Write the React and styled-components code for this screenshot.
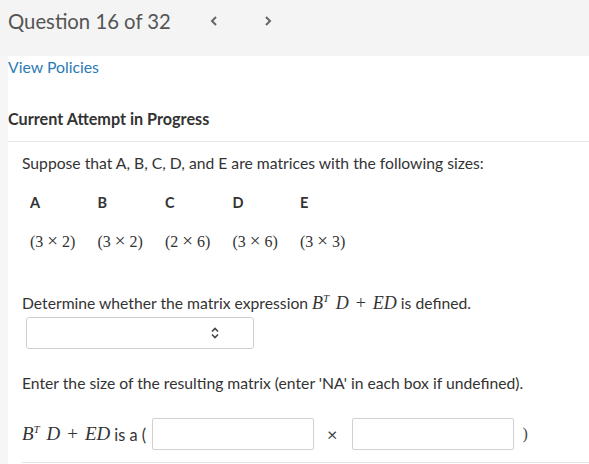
import React from "react"
import styled, { createGlobalStyle } from "styled-components"

const GlobalStyle = createGlobalStyle`
  body {
    margin: 0;
    background: #f6f6f6;
    font-family: Lato, "Open Sans", sans-serif;
    color: #333;
  }
`

const Header = styled.header`
  height: 56px;
  background: #f4f4f4;
  display: flex;
  align-items: flex-start;
  padding: 7px 0 0 8px;
  box-sizing: border-box;
`

const Title = styled.h1`
  margin: 0;
  font-size: 20.3px;
  line-height: 28px;
  font-weight: 400;
  color: #555;
  width: 202px;
`

const NavButton = styled.button`
  border: none;
  background: transparent;
  padding: 0;
  width: 54px;
  height: 28px;
  display: flex;
  align-items: center;
  cursor: pointer;
`

const Main = styled.main`
  margin-left: 8px;
  background: #fff;
  min-height: 408px;
  padding-top: 1px;
  box-sizing: border-box;
`

const PolicyLink = styled.a`
  display: block;
  font-size: 15.8px;
  line-height: 20px;
  color: #2b7bb5;
  text-decoration: none;
`

const Heading = styled.h2`
  margin: 32px 0 12px;
  font-size: 16.2px;
  line-height: 20px;
  font-weight: 700;
  color: #333;
`

const Divider = styled.hr`
  margin: 0;
  border: none;
  border-top: 1px solid #e6e6e6;
`

const Question = styled.section`
  padding: 10px 0 0 14px;
`

const Text = styled.p`
  margin: ${p => p.$top || 0}px 0 0;
  font-size: 15.7px;
  line-height: 22px;
  color: #333;
`

const SizeTable = styled.div`
  display: grid;
  grid-template-columns: repeat(5, 67.5px);
  padding-left: 8px;
  margin-top: ${p => p.$top}px;
`

const Label = styled.div`
  font-size: 14.5px;
  line-height: 20px;
  font-weight: 700;
  color: #333;
`

const Dim = styled.div`
  font-family: "Liberation Serif", serif;
  font-size: 16px;
  line-height: 22px;
  color: #333;
`

const Cross = styled.span`
  font-size: 19px;
  margin: 0 4px;
  line-height: 0;
`

const Math = styled.span`
  font-family: "Liberation Serif", serif;
  font-style: italic;
  font-size: ${p => p.$size || 18}px;
  margin-right: 4px;

  sup {
    font-size: 11px;
    vertical-align: 7px;
    line-height: 0;
    margin-right: 2px;
  }
`

const Plus = styled.span`
  font-style: normal;
  margin: 0 7px;
`

const Select = styled.div`
  margin: 3px 0 0 4px;
  width: 228px;
  height: 32px;
  border: 1px solid #cfcfcf;
  border-radius: 3px;
  box-sizing: border-box;
  display: flex;
  align-items: center;
  justify-content: flex-end;
  padding-right: 33px;
`

const AnswerRow = styled.div`
  display: flex;
  align-items: center;
  margin-top: 24px;
  height: 32px;
  font-size: 16.3px;
`

const Box = styled.input`
  width: 162px;
  height: 32px;
  box-sizing: border-box;
  border: 1px solid #d2d2d2;
  border-radius: 2px;
  margin-left: ${p => p.$left}px;
  outline: none;
`

const Times = styled.span`
  margin-left: 13px;
  font-size: 18px;
  color: #444;
`

const Close = styled.span`
  margin-left: 8px;
  font-family: "Liberation Serif", serif;
  font-size: 16px;
  color: #444;
`

const BottomLine = styled.hr`
  margin: 12px 0 0;
  border: none;
  border-top: 1px solid #e3e3e3;
`

const Chevron = ({ dir }) => (
  <svg width="8" height="12" viewBox="0 0 8 12">
    <path
      d={dir === "left" ? "M6 2 L2 6 L6 10" : "M2 2 L6 6 L2 10"}
      fill="none"
      stroke="#666"
      strokeWidth="2"
    />
  </svg>
)

const UpDown = () => (
  <svg width="10" height="14" viewBox="0 0 10 14">
    <path d="M2 5.5 L5 2.5 L8 5.5 M2 8.5 L5 11.5 L8 8.5" fill="none" stroke="#444" strokeWidth="1.6" />
  </svg>
)

const Expr = ({ size }) => (
  <Math $size={size}>
    B<sup>T</sup> D<Plus>+</Plus>ED
  </Math>
)

const matrices = [
  ["A", 3, 2],
  ["B", 3, 2],
  ["C", 2, 6],
  ["D", 3, 6],
  ["E", 3, 3],
]

const App = () => {
  return (
    <>
      <GlobalStyle />
      <Header>
        <Title>Question 16 of 32</Title>
        <NavButton><Chevron dir="left" /></NavButton>
        <NavButton><Chevron dir="right" /></NavButton>
      </Header>
      <Main>
        <PolicyLink href="#">View Policies</PolicyLink>
        <Heading>Current Attempt in Progress</Heading>
        <Divider />
        <Question>
          <Text>Suppose that A, B, C, D, and E are matrices with the following sizes:</Text>
          <SizeTable $top={19}>
            {matrices.map(([name]) => <Label key={name}>{name}</Label>)}
          </SizeTable>
          <SizeTable $top={18}>
            {matrices.map(([name, r, c]) => (
              <Dim key={name}>({r}<Cross>×</Cross>{c})</Dim>
            ))}
          </SizeTable>
          <Text $top={39}>
            Determine whether the matrix expression <Expr size={18} />is defined.
          </Text>
          <Select><UpDown /></Select>
          <Text $top={23}>
            Enter the size of the resulting matrix (enter 'NA' in each box if undefined).
          </Text>
          <AnswerRow>
            <Expr size={19} />is a (
            <Box $left={6} />
            <Times>×</Times>
            <Box $left={15} />
            <Close>)</Close>
          </AnswerRow>
          <BottomLine />
        </Question>
      </Main>
    </>
  )
}

export default App
